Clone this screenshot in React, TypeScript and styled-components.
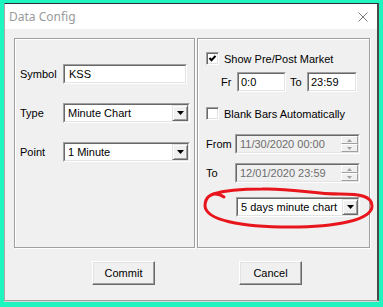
import React from "react";
import styled, { createGlobalStyle } from "styled-components";

const Global = createGlobalStyle`
  html, body { margin: 0; padding: 0; background: #1ef5bf; }
  body { font-family: "Liberation Sans", Arial, sans-serif; font-size: 11px; color: #000; }
  * { box-sizing: border-box; }
`;

const Page = styled.div`
  position: relative;
  width: 383px;
  height: 307px;
  padding: 3px 0 0 4px;
  overflow: hidden;
`;

const Window = styled.div`
  width: 375px;
  display: flex;
  flex-direction: column;
  background: #f0f0f0;
  border-top: 1px solid #2b2b3a;
  border-left: 1px solid #a9a9a9;
  border-right: 2px solid #4a4a4a;
  border-bottom: 1px solid #a0a0a0;
  box-shadow: 0 1px 0 #d6d6d6;
`;

const TitleBar = styled.div`
  height: 25px;
  background: #fff;
  display: flex;
  align-items: center;
  justify-content: space-between;
  padding: 0 9px 0 4px;
`;

const Title = styled.span`
  font-family: "Noto Sans", "Open Sans", sans-serif;
  font-size: 12px;
  color: #9a9a9a;
`;

const Client = styled.div`
  height: 271px;
  padding: 9px 0 0 9px;
  display: flex;
  flex-direction: column;
`;

const Groups = styled.div`
  display: flex;
  gap: 2px;
  align-items: flex-start;
`;

const GroupBox = styled.div<{ $w: number; $pt: number; $pl: number }>`
  width: ${(p) => p.$w}px;
  height: 210px;
  border: 1px solid #a0a0a0;
  box-shadow: inset 1px 1px 0 #fff, 1px 1px 0 #fff;
  padding: ${(p) => p.$pt}px 0 0 ${(p) => p.$pl}px;
  display: flex;
  flex-direction: column;
`;

const LeftRows = styled.div`
  display: flex;
  flex-direction: column;
  gap: 19px;
`;

const Row = styled.div<{ $mt?: number; $pl?: number; $h?: number }>`
  display: flex;
  align-items: center;
  height: ${(p) => p.$h ?? 20}px;
  margin-top: ${(p) => p.$mt ?? 0}px;
  padding-left: ${(p) => p.$pl ?? 0}px;
`;

const Label = styled.span<{ $w: number; $ml?: number }>`
  width: ${(p) => p.$w}px;
  margin-left: ${(p) => p.$ml ?? 0}px;
  flex: none;
  white-space: nowrap;
`;

const FieldOuter = styled.div<{ $w: number }>`
  width: ${(p) => p.$w}px;
  height: 20px;
  flex: none;
  border: 1px solid;
  border-color: #a0a0a0 #fff #fff #a0a0a0;
`;

const FieldInner = styled.div<{ $disabled?: boolean; $indent?: number }>`
  height: 100%;
  display: flex;
  align-items: center;
  border: 1px solid;
  border-color: #696969 #e3e3e3 #e3e3e3 #696969;
  background: ${(p) => (p.$disabled ? "#f0f0f0" : "#fff")};
  color: ${(p) => (p.$disabled ? "#6d6d6d" : "#000")};
  padding-left: ${(p) => p.$indent ?? 3}px;
  white-space: nowrap;
  overflow: hidden;
`;

const FieldText = styled.span`
  flex: 1;
`;

const RaisedButton = styled.div`
  width: 16px;
  height: 100%;
  flex: none;
  display: flex;
  align-items: center;
  justify-content: center;
  background: #f0f0f0;
  border: 1px solid;
  border-color: #e3e3e3 #696969 #696969 #e3e3e3;
  box-shadow: inset 1px 1px 0 #fff, inset -1px -1px 0 #a0a0a0;
`;

const SpinColumn = styled.div`
  width: 17px;
  height: 100%;
  flex: none;
  display: flex;
  flex-direction: column;
`;

const SpinButton = styled.div`
  flex: 1;
  display: flex;
  align-items: center;
  justify-content: center;
  background: #f0f0f0;
  border: 1px solid;
  border-color: #fff #a0a0a0 #a0a0a0 #fff;
`;

const Check = styled.div`
  width: 13px;
  height: 13px;
  flex: none;
  display: flex;
  align-items: center;
  justify-content: center;
  background: #fff;
  border: 1px solid;
  border-color: #a0a0a0 #fff #fff #a0a0a0;
  box-shadow: inset 1px 1px 0 #696969, inset -1px -1px 0 #e3e3e3;
`;

const CheckText = styled.span`
  margin-left: 5px;
  white-space: nowrap;
`;

const ButtonRow = styled.div`
  display: flex;
  gap: 84px;
  margin-top: 13px;
  padding-left: 78px;
`;

const PushButton = styled.div`
  width: 63px;
  height: 24px;
  display: flex;
  align-items: center;
  justify-content: center;
  background: #f0f0f0;
  border: 1px solid;
  border-color: #fff #696969 #696969 #fff;
  box-shadow: inset -1px -1px 0 #a0a0a0, inset 1px 1px 0 #e3e3e3;
`;

const Annotation = styled.svg`
  position: absolute;
  left: 0;
  top: 0;
  pointer-events: none;
`;

const DownArrow = () => (
  <svg width="7" height="4" viewBox="0 0 7 4">
    <polygon points="0,0 7,0 3.5,4" fill="#000" />
  </svg>
);

const SmallArrow = ({ up }: { up?: boolean }) => (
  <svg width="5" height="3" viewBox="0 0 5 3">
    <polygon points={up ? "0,3 5,3 2.5,0" : "0,0 5,0 2.5,3"} fill="#a0a0a0" />
  </svg>
);

const TextField = ({ w, text, indent }: { w: number; text: string; indent?: number }) => (
  <FieldOuter $w={w}>
    <FieldInner $indent={indent}>
      <FieldText>{text}</FieldText>
    </FieldInner>
  </FieldOuter>
);

const SelectField = ({ w, text }: { w: number; text: string }) => (
  <FieldOuter $w={w}>
    <FieldInner $indent={3}>
      <FieldText>{text}</FieldText>
      <RaisedButton>
        <DownArrow />
      </RaisedButton>
    </FieldInner>
  </FieldOuter>
);

const DateField = ({ text }: { text: string }) => (
  <FieldOuter $w={125}>
    <FieldInner $disabled $indent={3}>
      <FieldText>{text}</FieldText>
      <SpinColumn>
        <SpinButton>
          <SmallArrow up />
        </SpinButton>
        <SpinButton>
          <SmallArrow />
        </SpinButton>
      </SpinColumn>
    </FieldInner>
  </FieldOuter>
);

const CheckBox = ({ checked }: { checked?: boolean }) => (
  <Check>
    {checked && (
      <svg width="9" height="9" viewBox="0 0 9 9">
        <polyline points="1.5,4 3.5,6.2 7.5,1.8" fill="none" stroke="#000" strokeWidth="2" />
      </svg>
    )}
  </Check>
);

export default function App() {
  return (
    <>
      <Global />
      <Page>
        <Window>
          <TitleBar>
            <Title>Data Config</Title>
            <svg width="10" height="10" viewBox="0 0 10 10">
              <path d="M0.5 0.5 L9.5 9.5 M9.5 0.5 L0.5 9.5" stroke="#7a7a7a" strokeWidth="1" />
            </svg>
          </TitleBar>
          <Client>
            <Groups>
              <GroupBox $w={181} $pt={25} $pl={5}>
                <LeftRows>
                  <Row>
                    <Label $w={43}>Symbol</Label>
                    <TextField w={124} text="KSS" indent={4} />
                  </Row>
                  <Row>
                    <Label $w={43}>Type</Label>
                    <SelectField w={127} text="Minute Chart" />
                  </Row>
                  <Row>
                    <Label $w={43}>Point</Label>
                    <SelectField w={127} text="1 Minute" />
                  </Row>
                </LeftRows>
              </GroupBox>
              <GroupBox $w={173} $pt={13} $pl={8}>
                <Row $h={13}>
                  <CheckBox checked />
                  <CheckText>Show Pre/Post Market</CheckText>
                </Row>
                <Row $mt={7} $pl={15}>
                  <Label $w={16}>Fr</Label>
                  <TextField w={49} text="0:0" indent={2} />
                  <Label $w={17} $ml={4}>To</Label>
                  <TextField w={50} text="23:59" indent={2} />
                </Row>
                <Row $mt={15} $h={13}>
                  <CheckBox />
                  <CheckText>Blank Bars Automatically</CheckText>
                </Row>
                <Row $mt={14}>
                  <Label $w={29}>From</Label>
                  <DateField text="11/30/2020 00:00" />
                </Row>
                <Row $mt={9}>
                  <Label $w={29}>To</Label>
                  <DateField text="12/01/2020 23:59" />
                </Row>
                <Row $mt={14} $pl={30}>
                  <SelectField w={124} text="5 days minute chart" />
                </Row>
              </GroupBox>
            </Groups>
            <ButtonRow>
              <PushButton>Commit</PushButton>
              <PushButton>Cancel</PushButton>
            </ButtonRow>
          </Client>
        </Window>
        <Annotation width="383" height="307" viewBox="0 0 383 307">
          <path
            d="M224 197 C214 190 205 196 205 206 C206 220 240 227 290 227 C336 227 372 220 372 206 C372 196 360 194 340 194 C312 194 292 188 262 189 C242 189 226 190 213 194"
            fill="none"
            stroke="#e8161c"
            strokeWidth="3"
            strokeLinecap="round"
          />
        </Annotation>
      </Page>
    </>
  );
}
